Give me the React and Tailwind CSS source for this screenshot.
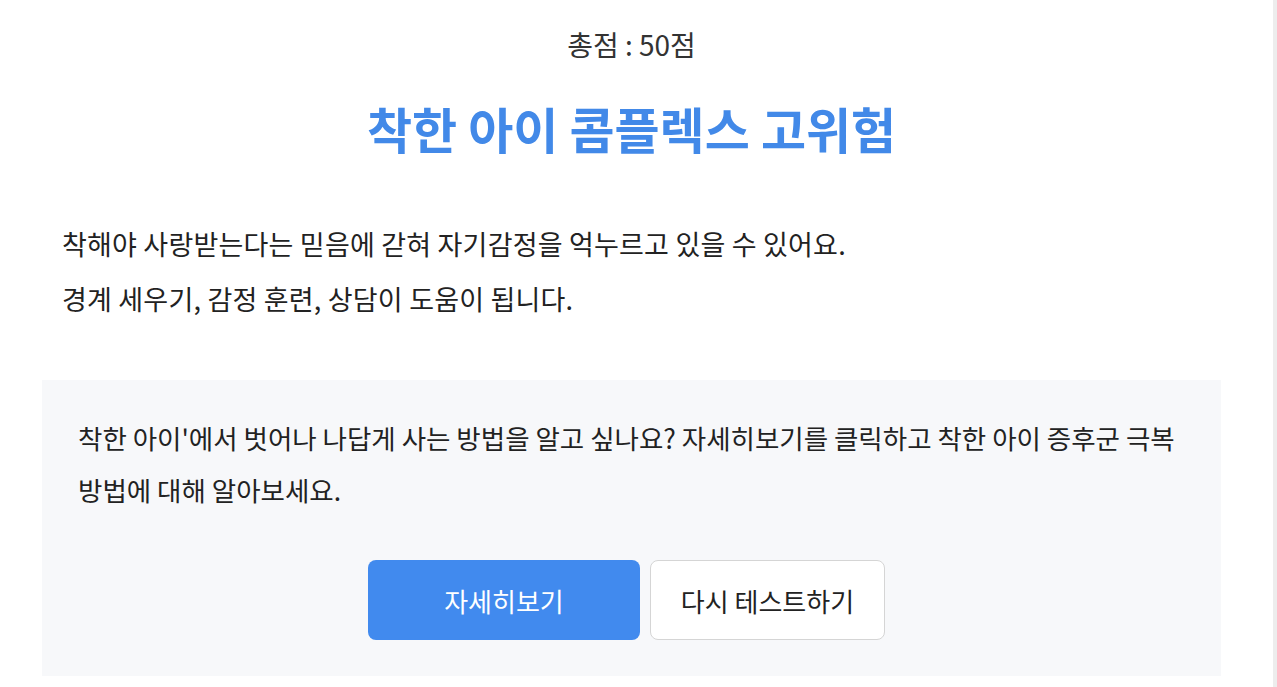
export default function App() {
  return (
    <div
      className="flex min-h-[687px] w-full bg-white"
      style={{ fontFamily: '"Noto Sans CJK KR", "Noto Sans", sans-serif' }}
    >
      <div className="w-[1263px] shrink-0 px-[42px]">
        <p className="pt-[24px] text-center text-[28px] leading-[40px] text-[#333333]">
          총점 : 50점
        </p>
        <h1 className="mt-[34px] text-center text-[49px] font-bold leading-[60px] text-[#4289e8]">
          착한 아이 콤플렉스 고위험
        </h1>
        <div className="mt-[58px] px-[20px] text-[27px] leading-[55px] tracking-[0.2px] text-[#222222]">
          <p>착해야 사랑받는다는 믿음에 갇혀 자기감정을 억누르고 있을 수 있어요.</p>
          <p>경계 세우기, 감정 훈련, 상담이 도움이 됩니다.</p>
        </div>
        <div className="mt-[54px] bg-[#f7f8fa] px-[36px] pb-[36px] pt-[32px]">
          <p className="text-[26.5px] leading-[52px] text-[#222222]">
            착한 아이'에서 벗어나 나답게 사는 방법을 알고 싶나요? 자세히보기를 클릭하고 착한 아이 증후군 극복 방법에 대해 알아보세요.
          </p>
          <div className="mt-[44px] flex justify-center">
            <button className="mr-[10px] h-[80px] w-[272px] rounded-[8px] bg-[#418aee] text-[26px] text-white">
              자세히보기
            </button>
            <button className="mr-[10px] h-[80px] w-[235px] rounded-[8px] border border-[#d5d5d5] bg-white text-[26px] text-[#222222]">
              다시 테스트하기
            </button>
          </div>
        </div>
      </div>
      <div className="ml-auto w-[4px] bg-[#ededed]" />
    </div>
  );
}
